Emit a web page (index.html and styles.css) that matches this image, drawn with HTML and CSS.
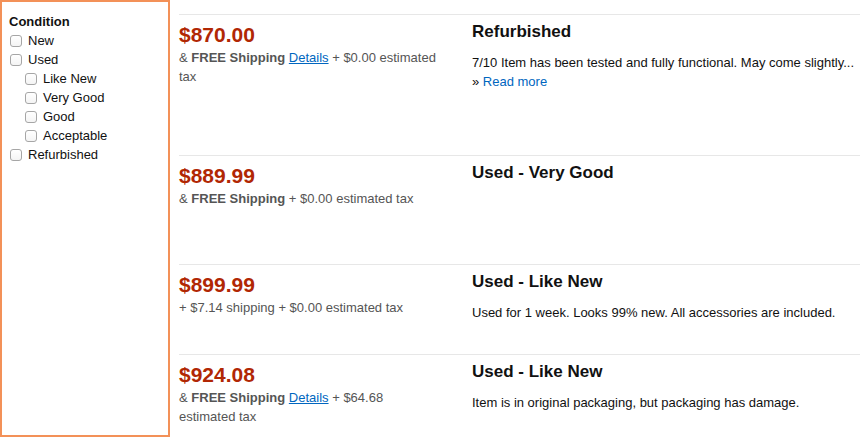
FILE: index.html
```html
<!DOCTYPE html>
<html>
<head>
<meta charset="utf-8">
<link rel="stylesheet" href="styles.css">
</head>
<body>
<div class="page">
  <aside class="filters">
    <div class="filter-title">Condition</div>
    <label class="opt"><input type="checkbox"><span>New</span></label>
    <label class="opt"><input type="checkbox"><span>Used</span></label>
    <label class="opt sub"><input type="checkbox"><span>Like New</span></label>
    <label class="opt sub"><input type="checkbox"><span>Very Good</span></label>
    <label class="opt sub"><input type="checkbox"><span>Good</span></label>
    <label class="opt sub"><input type="checkbox"><span>Acceptable</span></label>
    <label class="opt"><input type="checkbox"><span>Refurbished</span></label>
  </aside>
  <main class="offers">
    <div class="offer offer-1">
      <div class="price-col">
        <div class="price">$870.00</div>
        <div class="ship">&amp; <b>FREE Shipping</b> <a href="#">Details</a> + $0.00 estimated tax</div>
      </div>
      <div class="cond-col">
        <div class="cond">Refurbished</div>
        <div class="desc">7/10 Item has been tested and fully functional. May come slightly...</div>
        <div class="desc">» <a class="more" href="#">Read more</a></div>
      </div>
    </div>
    <div class="offer offer-2">
      <div class="price-col">
        <div class="price">$889.99</div>
        <div class="ship">&amp; <b>FREE Shipping</b> + $0.00 estimated tax</div>
      </div>
      <div class="cond-col">
        <div class="cond">Used - Very Good</div>
      </div>
    </div>
    <div class="offer offer-3">
      <div class="price-col">
        <div class="price">$899.99</div>
        <div class="ship">+ $7.14 shipping + $0.00 estimated tax</div>
      </div>
      <div class="cond-col">
        <div class="cond">Used - Like New</div>
        <div class="desc">Used for 1 week. Looks 99% new. All accessories are included.</div>
      </div>
    </div>
    <div class="offer offer-4">
      <div class="price-col">
        <div class="price">$924.08</div>
        <div class="ship">&amp; <b>FREE Shipping</b> <a href="#">Details</a> + $64.68 estimated tax</div>
      </div>
      <div class="cond-col">
        <div class="cond">Used - Like New</div>
        <div class="desc">Item is in original packaging, but packaging has damage.</div>
      </div>
    </div>
  </main>
</div>
</body>
</html>
```

FILE: styles.css
```css
html, body {
  margin: 0;
  padding: 0;
  background: #fff;
}
body {
  font-family: "Liberation Sans", Arial, sans-serif;
  font-size: 13px;
  color: #111;
  overflow: hidden;
}
.page {
  display: flex;
  gap: 9px;
  width: 860px;
  height: 437px;
}
.filters {
  box-sizing: border-box;
  width: 170px;
  height: 437px;
  flex: none;
  border: 2px solid #f39158;
  padding: 10px 0 0 7px;
}
.filter-title {
  font-weight: bold;
  line-height: 19px;
}
.opt {
  display: flex;
  align-items: center;
  height: 19px;
  line-height: 19px;
}
.opt input {
  -webkit-appearance: none;
  appearance: none;
  box-sizing: border-box;
  width: 12px;
  height: 12px;
  margin: 1px 6px 0 1px;
  border: 1px solid #a6a6a6;
  border-radius: 3px;
  background: linear-gradient(#fff, #f4f4f4);
}
.opt.sub {
  padding-left: 15px;
}
.offers {
  flex: 1;
  padding-top: 14px;
}
.offer {
  box-sizing: border-box;
  display: flex;
  gap: 33px;
  border-top: 1px solid #e7e7e7;
  padding-top: 7px;
}
.offer-1 { height: 141px; }
.offer-2 { height: 109px; }
.offer-3 { height: 90px; }
.offer-4 { height: 90px; }
.price-col {
  width: 260px;
  flex: none;
}
.price {
  color: #b12704;
  font-weight: bold;
  font-size: 21px;
  line-height: 26px;
}
.ship {
  color: #555;
  line-height: 19px;
}
.ship b {
  font-weight: bold;
}
a {
  color: #0066c0;
}
.more {
  text-decoration: none;
}
.cond {
  font-weight: bold;
  font-size: 17px;
  line-height: 19px;
  margin-bottom: 12px;
}
.desc {
  line-height: 19px;
}
```
